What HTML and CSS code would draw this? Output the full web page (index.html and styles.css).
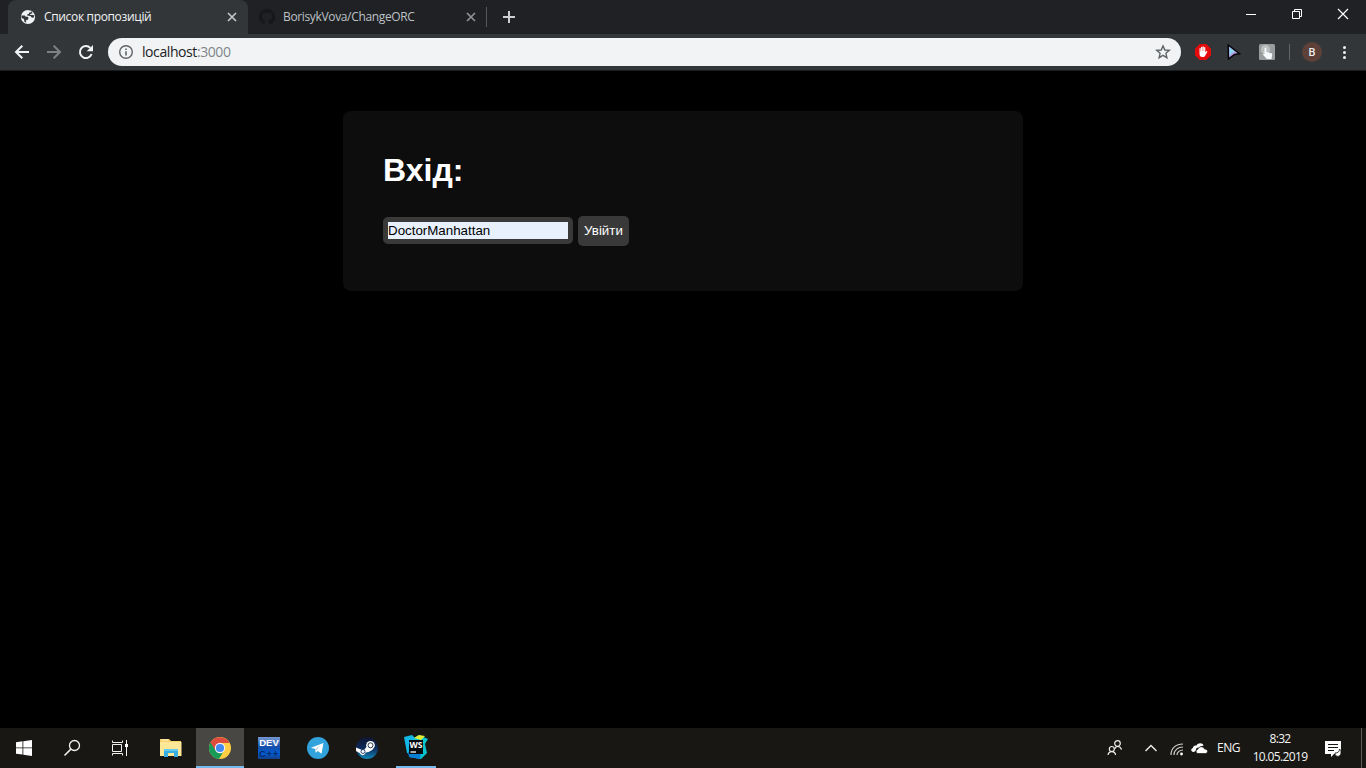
FILE: index.html
```html
<!DOCTYPE html>
<html lang="uk">
<head>
<meta charset="utf-8">
<title>Список пропозицій</title>
<link rel="stylesheet" href="styles.css">
</head>
<body>
<header class="tabstrip">
  <div class="tab tab-active">
    <svg class="favicon" width="16" height="16" viewBox="0 0 16 16"><circle cx="8" cy="8" r="7.1" fill="#f1f3f4"/><path d="M1.500 6.500h3.300l1 1.200h2l.8 1.400-1.100 1.800-1.700.4.500 2.300-1.800-.7-.5-2.800-2.500-1.200z" fill="#323639"/><path d="M8 1.600l2.600.3.700 1.300-2 .4-.6 1.300-1.700.5.200 1.200 3.200.3 1.500 1.800 1.900-.1.500-2-1.600-.7-2.500.1.100-1 2.300-.8-.8-1.500-2-1.100z" fill="#323639"/></svg>
    <span class="tab-title title-first">Список пропозицій</span>
    <svg class="tab-close" width="16" height="16" viewBox="0 0 16 16"><path d="M4 4l8 8M12 4l-8 8" stroke="#c5c7c9" stroke-width="1.7"/></svg>
  </div>
  <div class="tab tab-inactive">
    <svg class="favicon" width="16" height="16" viewBox="0 0 16 16"><path fill="#15171a" d="M8 0C3.580 0 0 3.580 0 8c0 3.540 2.290 6.530 5.470 7.590.4.070.55-.17.55-.38 0-.19-.01-.82-.01-1.490-2.010.37-2.530-.49-2.690-.94-.09-.23-.48-.94-.82-1.130-.28-.15-.68-.52-.01-.53.630-.01 1.080.58 1.230.82.72 1.210 1.870.87 2.330.66.070-.52.28-.87.51-1.070-1.780-.2-3.640-.89-3.640-3.950 0-.87.31-1.590.82-2.150-.08-.2-.36-1.020.08-2.120 0 0 .67-.21 2.200.82a7.600 7.600 0 014 0c1.530-1.040 2.200-.82 2.200-.82.44 1.100.16 1.920.08 2.120.51.56.82 1.270.82 2.150 0 3.070-1.870 3.750-3.650 3.950.29.25.54.73.54 1.480 0 1.070-.01 1.930-.01 2.200 0 .21.15.46.55.38A8.010 8.010 0 0016 8c0-4.420-3.580-8-8-8z"/></svg>
    <span class="tab-title title-second">BorisykVova/ChangeORC</span>
    <svg class="tab-close" width="16" height="16" viewBox="0 0 16 16"><path d="M4 4l8 8M12 4l-8 8" stroke="#8f9296" stroke-width="1.7"/></svg>
    <i class="tab-divider"></i>
  </div>
  <svg class="new-tab" width="16" height="16" viewBox="0 0 16 16"><path d="M8 2v12M2 8h12" stroke="#cdcfd1" stroke-width="2"/></svg>
  <div class="window-controls">
    <svg width="46" height="28" viewBox="0 0 46 28"><path d="M18 14.500h10" stroke="#fff"/></svg>
    <svg width="46" height="28" viewBox="0 0 46 28" fill="none" stroke="#fff"><path d="M18.500 11.500h7v7h-7zM20.500 11V9.500h7v7H26"/></svg>
    <svg width="46" height="28" viewBox="0 0 46 28"><path d="M18 9l10 10M28 9L18 19" stroke="#fff" stroke-width="1.200"/></svg>
  </div>
</header>

<nav class="toolbar">
  <svg class="nav-icon" width="16" height="16" viewBox="0 0 16 16" fill="none" stroke="#f1f3f4" stroke-width="2"><path d="M15 8H2.500M8.300 1.700L2 8l6.300 6.300"/></svg>
  <svg class="nav-icon" width="16" height="16" viewBox="0 0 16 16" fill="none" stroke="#7e8184" stroke-width="2"><path d="M1 8h12.500M7.700 1.700L14 8l-6.300 6.300"/></svg>
  <svg class="nav-icon" width="16" height="16" viewBox="0 0 16 16"><path d="M13.600 10A6 6 0 1 1 12.300 3.900" fill="none" stroke="#f1f3f4" stroke-width="2"/><path d="M15 1v6.300H8.700z" fill="#f1f3f4"/></svg>
  <div class="omnibox">
    <svg width="16" height="16" viewBox="0 0 16 16"><circle cx="8" cy="8" r="6.300" fill="none" stroke="#5f6368" stroke-width="1.400"/><path d="M8 7.200v4.300M8 4.400V6" stroke="#5f6368" stroke-width="1.600"/></svg>
    <span class="url">localhost<span class="port">:3000</span></span>
    <svg class="star" width="16" height="16" viewBox="0 0 16 16"><path d="M8 1.900l1.800 4.100 4.500.4-3.400 2.900 1 4.400L8 11.400l-3.900 2.300 1-4.400-3.400-2.900 4.500-.4z" fill="none" stroke="#5f6368" stroke-width="1.400"/></svg>
  </div>
  <div class="extensions">
    <svg width="16" height="16" viewBox="0 0 16 16"><path d="M4.700 0h6.600L16 4.700v6.600L11.300 16H4.700L0 11.300V4.700z" fill="#e30b0b"/><path d="M4.500 8.700V4.500c0-.8 1.100-.8 1.200 0v2.700h.3V3.300c0-.9 1.200-.9 1.200 0V7h.3V2.900c0-.9 1.300-.9 1.300 0V7h.3V3.700c0-.9 1.200-.9 1.200 0v4.500l1-.9c.7-.5 1.300.1.900.7l-2.300 4.300c-.6 1.100-4 1.100-4.800-.3-.5-.900-.6-1.800-.6-3.300z" fill="#fff"/></svg>
    <svg width="16" height="16" viewBox="0 0 16 16"><path d="M1.200 1l11.300 8.700-5 .8-6 4.500z" fill="#b99be8" stroke="#050507" stroke-width="1.500"/><path d="M2.500 3.200l5.500 4.500L4.800 9l-2.300 3z" fill="#87d9ef"/></svg>
    <svg width="16" height="16" viewBox="0 0 16 16"><rect width="16" height="16" rx="1.500" fill="#999b9d"/><circle cx="6.500" cy="5.500" r="4" fill="#b8babb" stroke="#c8caca"/><path d="M5.500 4.500c0-1.200 1.900-1.200 1.900 0V8l5 1.200c.8.200 1 .8.800 1.600L12.500 15H7.800L4 10.700c-.3-.9.700-1.300 1.500-.5z" fill="#f6f9fb"/></svg>
  </div>
  <i class="toolbar-divider"></i>
  <span class="avatar">B</span>
  <svg class="menu" width="4" height="16" viewBox="0 0 4 16" fill="#f1f3f4"><circle cx="2.500" cy="3.500" r="1.500"/><circle cx="2.500" cy="8.500" r="1.500"/><circle cx="2.500" cy="13.500" r="1.500"/></svg>
</nav>

<main class="page">
  <section class="login-card">
    <h1 class="login-title">Вхід:</h1>
    <form class="login-form">
      <input class="login-input" type="text" value="DoctorManhattan" aria-label="Вхід">
      <button class="login-button" type="button">Увійти</button>
    </form>
  </section>
</main>

<footer class="taskbar">
  <div class="task-item"><svg width="16" height="16" viewBox="0 0 16 16" fill="#fff"><path d="M0 2.200L6.500 1.300v6.200H0zM7.300 1.200L16 0v7.500H7.300zM0 8.300h6.500v6.200L0 13.700zM7.300 8.300H16V16l-8.700-1.300z"/></svg></div>
  <div class="task-item"><svg width="18" height="18" viewBox="0 0 18 18" fill="none" stroke="#f2f2f2"><circle cx="11.500" cy="6.500" r="5" stroke-width="1.300"/><path d="M7.900 10.100L1.500 16.500" stroke-width="1.500"/></svg></div>
  <div class="task-item"><svg width="18" height="16" viewBox="0 0 18 16" fill="none" stroke="#f2f2f2"><path d="M1.500.5v2h10v-2M1.500 15.500v-2h10v2M1.500 4.500h9v7h-9zM15.500 0v16"/><path d="M14 4h3v3h-3z" fill="#fff" stroke="none"/></svg></div>
  <div class="task-item task-pinned"><svg width="22" height="20" viewBox="0 0 22 20"><path d="M0 1h9l2 2h10v15H0z" fill="#f6d36b"/><path d="M2 2h6" stroke="#fff6d2"/><path d="M0 4h21.500v14H0z" fill="#ffe797"/><path d="M4 19v-8h14v8h-4v-4H8v4z" fill="#39aee1"/><path d="M4 11h14v2H4z" fill="#63c9ef"/></svg></div>
  <div class="task-item task-current"><svg width="24" height="24" viewBox="0 0 24 24"><circle cx="12" cy="12" r="11" fill="#ffce43"/><path d="M12 12L2.500 6.400A11 11 0 0 0 11 23l5-8.500z" fill="#199b58"/><path d="M2.500 6.400A11 11 0 0 1 21.600 7H12l-4.500 7.500z" fill="#df4c3d"/><circle cx="12" cy="12" r="5.200" fill="#f4f4f4"/><circle cx="12" cy="12" r="4.100" fill="#4688f1"/></svg></div>
  <div class="task-item"><div class="dev-icon"><span class="dev-name">DEV</span><span class="dev-lang">C++</span></div></div>
  <div class="task-item"><svg width="22" height="22" viewBox="0 0 22 22"><circle cx="11" cy="11" r="11" fill="#31a2dc"/><path d="M4 10.800L16.500 6l-2 10.700-3.700-2.700-2 1.700-.8-3.700z" fill="#fff"/><path d="M8 12l6-4-4.500 5-.6 2.600z" fill="#bcd7e7"/></svg></div>
  <div class="task-item"><svg width="22" height="22" viewBox="0 0 22 22"><defs><linearGradient id="steam" x1="0" y1="0" x2="0" y2="1"><stop stop-color="#101630"/><stop offset=".5" stop-color="#0d2858"/><stop offset="1" stop-color="#1387b7"/></linearGradient></defs><circle cx="11" cy="11" r="11" fill="url(#steam)"/><path d="M0 10.500l6 2.400 2.500-.5 3-4 5.500 4-4.500 2.600-3 .6c-.4 3.300-4.500 3.300-5.500.7L0 14z" fill="#fff"/><circle cx="14.500" cy="8.300" r="4.300" fill="#fff"/><circle cx="14.500" cy="8.300" r="2.500" fill="#fff" stroke="#263450" stroke-width="1"/><circle cx="7" cy="14.500" r="2" fill="none" stroke="#243c65" stroke-width=".9"/></svg></div>
  <div class="task-item task-open"><svg width="24" height="24" viewBox="0 0 24 24"><path d="M0 2l8-2 4 4-1 18-8-4z" fill="#13b8e7"/><path d="M10 3l5-3 9 4-3 5 2 9-6 6-12-2z" fill="#08c4ce"/><path d="M10 3l5-3 6 1-4 4z" fill="#e2ec36"/><path d="M4 17h13l-1 7-11-2z" fill="#087dd5"/><path d="M5 5h14v14H5z" fill="#080b0d"/><text class="logo-text" x="5.500" y="13" font-size="9" textLength="13" lengthAdjust="spacingAndGlyphs" fill="#fff">WS</text><path d="M6.500 17H12" stroke="#fff" stroke-width="1.300"/></svg></div>
  <div class="tray">
    <svg class="people" width="16" height="16" viewBox="0 0 16 16" fill="none" stroke="#eee" stroke-width="1.200"><circle cx="10.500" cy="3.500" r="2.800"/><path d="M7.800 9c.7-3.500 5.500-3.400 6.700.7"/><circle cx="4.800" cy="9" r="2.500"/><path d="M1 15c.6-4.600 7-4.600 7.600 0"/></svg>
    <svg class="chevron" width="14" height="8" viewBox="0 0 14 8"><path d="M1.500 7L7 1.500 12.500 7" fill="none" stroke="#eee" stroke-width="1.400"/></svg>
    <svg class="wifi" width="14" height="14" viewBox="0 0 14 14" fill="none" stroke="#d0d0ce" stroke-width="1.200"><path d="M1 13C1 6 6 2 13 2M4 13c0-5 4-8 9-8M7 13c0-3 3-5 6-5"/><circle cx="11.500" cy="12" r="1.400" fill="#fff" stroke="none"/></svg>
    <svg class="cloud" width="17" height="11" viewBox="0 0 17 11"><path d="M2.500 9C-.5 8.800-.3 5.200 2 5c0-2 2-3 3.300-2.300C7-.7 12-.3 12.500 2.700c-2-.2-3.200.8-4 2C5.800 4.200 4.400 6 4.800 8z" fill="#fff"/><path d="M7 10.500c-2.500 0-2.500-4 0-4.300.5-3 5.500-3.400 6.500-.2 4.200 0 3.800 4.500.8 4.500z" fill="#fff" stroke="#181713" stroke-width=".7"/></svg>
    <span class="language">ENG</span>
    <div class="clock"><span class="time">8:32</span><span class="date">10.05.2019</span></div>
    <svg class="notifications" width="17" height="17" viewBox="0 0 17 17"><path d="M0 0h16v13H9l-3 3v-3H0z" fill="#fff"/><path d="M3 3.500h10M3 6.500h10M3 9.500h6" stroke="#171611"/><path d="M14.500 8c-.2 3-1.500 4-4.500 4-.5 4 5.500 5 6 0 .2-1.700-.4-3-1.500-4z" fill="#fff" stroke="#171611" stroke-width=".8"/></svg>
    <i class="show-desktop"></i>
  </div>
</footer>
</body>
</html>
```
FILE: styles.css
```css
* { box-sizing: border-box; }
body { margin: 0; width: 1366px; height: 768px; overflow: hidden; display: flex; flex-direction: column; background: #000; font-family: "Open Sans", "Noto Sans", sans-serif; }
svg { display: block; flex-shrink: 0; }
.tabstrip { height: 34px; display: flex; align-items: flex-start; padding-left: 8px; background: #202124; }
.tab { width: 240px; height: 34px; display: flex; align-items: center; flex-shrink: 0; padding: 0 8px 0 12px; }
.tab-active { background: #323639; border-radius: 8px 8px 0 0; }
.tab-inactive { padding: 0 0 0 11px; }
.tab-title { margin-left: 8px; flex: 1; white-space: nowrap; font-size: 12px; line-height: 18px; }
.title-first { color: #f1f3f4; letter-spacing: -0.34px; }
.title-second { color: #bdc1c6; letter-spacing: -0.35px; }
.tab-divider { width: 1px; height: 20px; margin-left: 7px; margin-right: 1px; background: #55585c; }
.new-tab { margin: 9px 0 0 13px; }
.window-controls { display: flex; margin-left: auto; }
.toolbar { height: 37px; display: flex; align-items: center; padding-left: 14px; padding-bottom: 1px; background: #323639; border-bottom: 1px solid #191b1c; }
.nav-icon { margin-right: 16px; }
.omnibox { width: 1073px; height: 28px; margin-left: -2px; display: flex; align-items: center; padding: 0 10px; border-radius: 14px; background: #f1f3f4; }
.url { margin-left: 8px; font-size: 14px; line-height: 20px; letter-spacing: -0.42px; color: #202124; }
.port { color: #80868b; }
.star { margin-left: auto; }
.extensions { display: flex; gap: 16px; margin-left: 14px; }
.toolbar-divider { width: 1px; height: 16px; margin-left: 14px; background: #62666a; }
.avatar { width: 20px; height: 20px; margin-left: 12px; border-radius: 50%; background: #5d4037; color: #eee; font: 500 11px/21px Roboto, sans-serif; text-align: center; }
.menu { margin-left: 20px; }
.page { flex: 1; padding-top: 40px; background: #000; font-family: "Liberation Sans", Arial, sans-serif; }
.login-card { width: 680px; height: 180px; margin: 0 auto; padding: 40px; border-radius: 8px; background: #0d0d0d; }
.login-title { margin: 0 0 26px; color: #fff; font-size: 32px; line-height: 39px; }
.login-form { display: flex; align-items: flex-start; gap: 5px; }
.login-input { width: 190px; height: 27px; margin-top: 1px; padding: 1px 0; border: 5px solid #393939; border-radius: 5px; background: #e8f0fe; background-clip: padding-box; color: #000; font: 13.333px "Liberation Sans", Arial, sans-serif; outline: none; }
.login-button { width: 51px; height: 30px; padding: 0 0 2px; border: 0; border-radius: 5px; background: #393939; color: #fff; font: 13.333px "Liberation Sans", Arial, sans-serif; }
.taskbar { height: 40px; display: flex; background: #181713; color: #f5f5f5; }
.task-item { width: 48px; height: 40px; margin-right: 1px; display: flex; align-items: center; justify-content: center; }
.task-item:nth-child(-n+3) { margin-right: 0; }
.task-pinned { margin-left: 3px; }
.task-current { background: #484744; border-bottom: 2px solid #76b9ed; padding-top: 2px; }
.task-open { width: 40px; margin-left: 4px; border-bottom: 2px solid #76b9ed; }
.dev-icon { width: 22px; height: 22px; display: flex; flex-direction: column; align-items: center; background: linear-gradient(#7799d2, #164ea9 45%, #005bd1 75%, #163f89); font-family: "Liberation Sans", Arial, sans-serif; font-weight: 700; line-height: 11px; }
.dev-name { font-size: 9.5px; color: #fff; }
.dev-lang { font-size: 9.5px; letter-spacing: 0.6px; color: #082b66; }
.logo-text { font-family: "Open Sans", sans-serif; font-weight: 700; }
.tray { margin-left: auto; display: flex; align-items: center; font-size: 12px; }
.people { margin-right: 21px; }
.chevron { margin-right: 12px; }
.wifi { margin: 2px 7px 0 0; }
.cloud { margin-right: 9px; }
.language { width: 36px; margin-top: -1px; letter-spacing: -0.5px; }
.clock { width: 56px; height: 40px; display: flex; flex-direction: column; align-items: center; padding: 2px 2px 0 0; line-height: 18px; white-space: nowrap; letter-spacing: -0.65px; }
.notifications { margin: 2px 0 0 16px; }
.show-desktop { width: 1px; height: 40px; margin-left: 19px; margin-right: 4px; background: #5e5d59; }
```
